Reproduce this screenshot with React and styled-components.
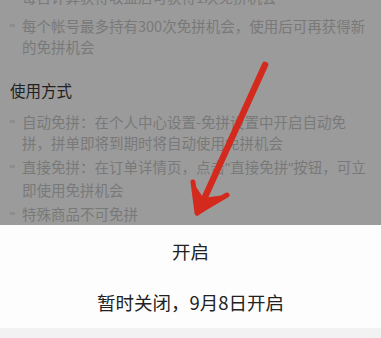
import React from "react";
import styled, { createGlobalStyle } from "styled-components";

const GlobalStyle = createGlobalStyle`
  html, body {
    margin: 0;
    padding: 0;
    background: #9b9b9b;
  }
  body {
    font-family: "Noto Sans CJK SC", "Noto Sans", sans-serif;
  }
`;

const Screen = styled.div`
  position: relative;
  width: 381px;
  height: 338px;
  display: flex;
  flex-direction: column;
  overflow: hidden;
  background: #9b9b9b;
`;

const Content = styled.div`
  height: 225px;
  flex-shrink: 0;
  overflow: hidden;
  padding: 0 8px 0 10px;
  box-sizing: border-box;
`;

const List = styled.ul`
  margin: ${(p) => p.$offset || "0"} 0 0;
  padding: 0;
  list-style: none;
  display: flex;
  flex-direction: column;
  gap: ${(p) => p.$gap || 3}px;
`;

const Item = styled.li`
  position: relative;
  padding-left: 12px;
  font-size: 14.5px;
  line-height: 21px;
  color: #797979;
  white-space: nowrap;

  &::before {
    content: "";
    position: absolute;
    left: 0;
    top: 9px;
    width: 5px;
    height: 3px;
    background: #8c8c8c;
  }
`;

const Quote = styled.span`
  font-family: "Liberation Sans", sans-serif;
`;

const Heading = styled.h3`
  margin: 23px 0 10px;
  font-size: 15.5px;
  line-height: 21px;
  font-weight: 400;
  color: #222;
`;

const Sheet = styled.div`
  display: flex;
  flex-direction: column;
  background: #fdfdfd;
`;

const SheetRow = styled.div`
  height: ${(p) => p.$h}px;
  display: flex;
  align-items: center;
  justify-content: center;
  font-size: 18.5px;
  color: #222;
`;

const Gap = styled.div`
  flex: 1;
  background: #f2f2f2;
`;

const Overlay = styled.svg`
  position: absolute;
  left: 0;
  top: 0;
  pointer-events: none;
`;

const Arrow = () => (
  <Overlay width="381" height="338" viewBox="0 0 381 338">
    <g stroke="#d42a1e" strokeLinecap="round" strokeLinejoin="round" fill="#d42a1e">
      <line x1="265" y1="65" x2="200" y2="208" strokeWidth="6.5" />
      <line x1="197" y1="213" x2="193" y2="182" strokeWidth="5" />
      <line x1="198" y1="212" x2="227" y2="195" strokeWidth="5" />
      <polygon points="197,215 193,184 203,199 225,196" strokeWidth="2" />
    </g>
  </Overlay>
);

export default function App() {
  return (
    <>
      <GlobalStyle />
      <Screen>
        <Content>
          <List $offset="-14.5px" $gap={8}>
            <Item>每日计算获得收益后可获得1次免拼机会</Item>
            <Item>
              每个帐号最多持有300次免拼机会，使用后可再获得新
              <br />
              的免拼机会
            </Item>
          </List>
          <Heading>使用方式</Heading>
          <List>
            <Item>
              自动免拼：在个人中心设置-免拼设置中开启自动免
              <br />
              拼，拼单即将到期时将自动使用免拼机会
            </Item>
            <Item>
              直接免拼：在订单详情页，点击<Quote>"</Quote>直接免拼<Quote>"</Quote>按钮，可立
              <br />
              即使用免拼机会
            </Item>
            <Item>特殊商品不可免拼</Item>
          </List>
        </Content>
        <Sheet>
          <SheetRow $h={51}>开启</SheetRow>
          <SheetRow $h={52}>暂时关闭，9月8日开启</SheetRow>
        </Sheet>
        <Gap />
        <Arrow />
      </Screen>
    </>
  );
}
